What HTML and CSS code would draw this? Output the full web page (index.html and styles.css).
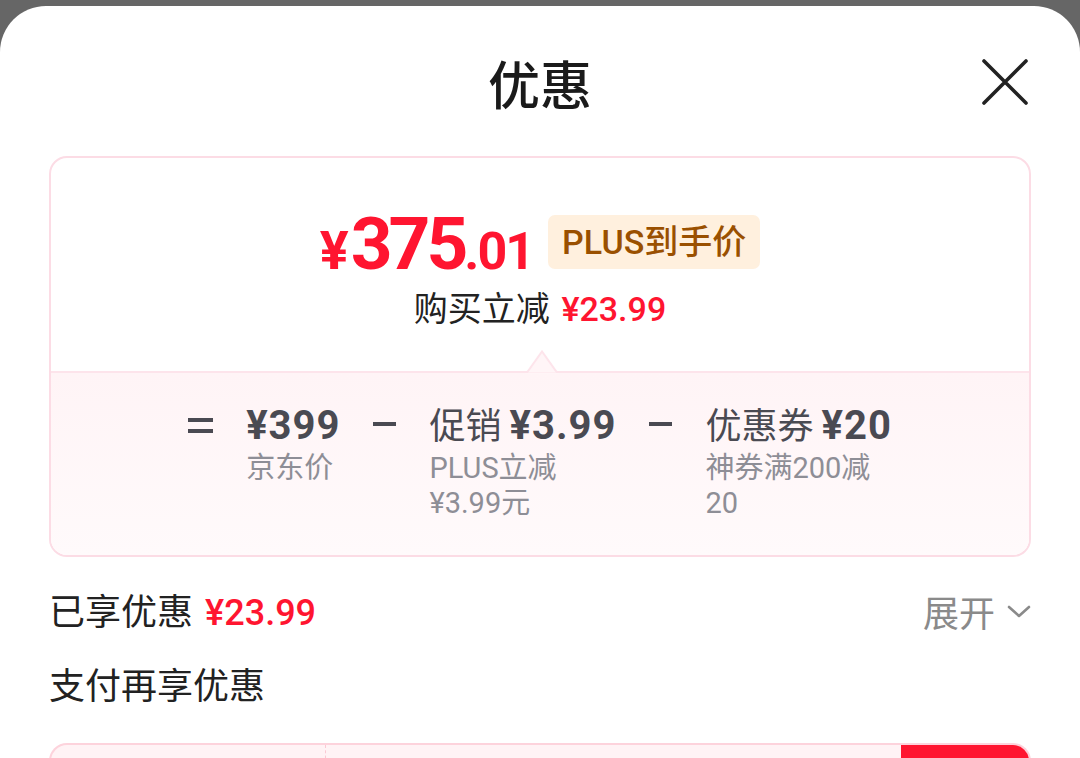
FILE: index.html
```html
<!DOCTYPE html>
<html lang="zh-CN">
  <head>
    <meta charset="UTF-8" />
    <meta name="viewport" content="width=device-width, initial-scale=1.0" />
    <title>优惠</title>
    <link rel="stylesheet" href="styles.css">
  </head>
  <body>
    <div class="sheet">
      <div class="header">
        <h1>优惠</h1>
        <button class="close" aria-label="关闭">
          <svg width="46" height="46" viewBox="0 0 46 46">
            <path d="M2 2 L44 44 M44 2 L2 44" stroke="#222" stroke-width="3.6" stroke-linecap="round" fill="none" />
          </svg>
        </button>
      </div>

      <div class="card">
        <div class="card-top">
          <div class="price-row">
            <div class="price">
              <span class="yen">¥</span><span class="int">375</span><span class="dec">.01</span>
            </div>
            <span class="badge">PLUS到手价</span>
          </div>
          <div class="saving">购买立减 <span class="red">¥23.99</span></div>
          <svg class="notch" width="34" height="24" viewBox="0 0 34 24">
            <path d="M0 22.5 L2 22.5 L17 1.5 L32 22.5 L34 22.5" stroke="#fde4eb" stroke-width="2" fill="#fff5f7" />
            <rect x="0" y="23" width="34" height="1" fill="#fff5f7" />
          </svg>
        </div>
        <div class="card-bottom">
          <div class="formula">
            <span class="op eq"></span>
            <div class="term">
              <div class="value"><b>¥399</b></div>
              <div class="sub">京东价</div>
            </div>
            <span class="op minus"></span>
            <div class="term">
              <div class="value">促销 <b>¥3.99</b></div>
              <div class="sub">PLUS立减¥3.99元</div>
            </div>
            <span class="op minus"></span>
            <div class="term">
              <div class="value">优惠券 <b>¥20</b></div>
              <div class="sub">神券满200减20</div>
            </div>
          </div>
        </div>
      </div>

      <div class="row enjoyed">
        <div>已享优惠 <span class="red">¥23.99</span></div>
        <div class="expand">
          展开
          <svg width="24" height="16" viewBox="0 0 24 16">
            <path d="M2 4 L12 13 L22 4" stroke="#8a8a8a" stroke-width="2.6" fill="none" stroke-linecap="round" stroke-linejoin="round" />
          </svg>
        </div>
      </div>
      <div class="row pay">支付再享优惠</div>

      <div class="pay-box">
        <div class="pay-left"></div>
        <div class="pay-mid"></div>
        <div class="pay-btn"></div>
      </div>
    </div>
  </body>
</html>
```

FILE: styles.css
```css
html, body {
  margin: 0;
  height: 100%;
}
body {
  background-color: #666;
  font-family: Roboto, "Noto Sans CJK SC", sans-serif;
  color: #222;
  overflow: hidden;
}
.sheet {
  position: relative;
  margin-top: 6px;
  height: calc(100% - 6px);
  background-color: #fff;
  border-radius: 46px 46px 0 0;
}
.header {
  height: 150px;
  padding-top: 47px;
  box-sizing: border-box;
  text-align: center;
}
.header h1 {
  margin: 0;
  font-family: "Noto Sans CJK SC", sans-serif;
  font-size: 52px;
  line-height: 60px;
  font-weight: 500;
  color: #1a1a1a;
}
.close {
  position: absolute;
  top: 53px;
  right: 52px;
  padding: 0;
  border: none;
  background: none;
  line-height: 0;
}
.red {
  color: #ff1530;
}

.card {
  margin: 0 49px;
  border: 2px solid #fcdce5;
  border-radius: 18px;
  overflow: hidden;
}
.card-top {
  position: relative;
  padding: 56px 0 42px;
  border-bottom: 2px solid #fde4eb;
  text-align: center;
}
.price-row {
  display: flex;
  justify-content: center;
  align-items: center;
  gap: 15px;
  height: 56px;
}
.price {
  margin-top: 24px;
  color: #ff1530;
  font-weight: 700;
  line-height: 56px;
  white-space: nowrap;
}
.price .yen {
  font-size: 54px;
  margin-right: 2px;
}
.price .int {
  font-size: 73px;
  letter-spacing: -4px;
}
.price .dec {
  font-size: 52px;
  letter-spacing: -2px;
}
.badge {
  display: inline-block;
  height: 54px;
  line-height: 54px;
  padding: 0 14px;
  border-radius: 7px;
  background-color: #fff0de;
  color: #9a5000;
  font-size: 34px;
  font-weight: 500;
}
.saving {
  margin-top: 17px;
  font-family: "Noto Sans CJK SC", sans-serif;
  font-size: 34px;
  line-height: 40px;
  color: #222;
}
.saving .red {
  font-family: Roboto, sans-serif;
  font-weight: 500;
  margin-left: 4px;
}
.notch {
  position: absolute;
  left: 474px;
  bottom: -3px;
}

.card-bottom {
  padding: 28px 0 34px;
  background: linear-gradient(#fff4f6, #fffafb);
}
.formula {
  display: flex;
  justify-content: center;
  gap: 33px;
  color: #4a4a52;
}
.op {
  position: relative;
  width: 25px;
  height: 44px;
}
.op::before,
.op::after {
  content: "";
  position: absolute;
  left: 0;
  width: 25px;
  height: 4px;
  background-color: #4a4a52;
}
.eq::before {
  top: 17px;
}
.eq::after {
  top: 28px;
}
.minus {
  width: 23px;
}
.minus::before {
  top: 21px;
  width: 23px;
}
.minus::after {
  display: none;
}
.term {
  display: flex;
  flex-direction: column;
}
.value {
  font-size: 36px;
  line-height: 44px;
  white-space: nowrap;
  font-family: "Noto Sans CJK SC", sans-serif;
}
.value b {
  font-family: Roboto, sans-serif;
  font-size: 40px;
  font-weight: 700;
  letter-spacing: 1px;
}
.sub {
  width: 0;
  min-width: 100%;
  margin-top: 3px;
  font-size: 29px;
  line-height: 35px;
  color: #8e8e96;
}

.row {
  display: flex;
  justify-content: space-between;
  align-items: center;
  padding: 0 49px;
  font-family: "Noto Sans CJK SC", sans-serif;
  font-size: 36px;
  line-height: 48px;
}
.row .red {
  font-family: Roboto, sans-serif;
  font-weight: 500;
  margin-left: 4px;
}
.enjoyed {
  margin-top: 28px;
}
.expand {
  display: flex;
  align-items: center;
  gap: 12px;
  color: #8a8a8a;
}
.pay {
  margin-top: 22px;
}
.pay-box {
  display: flex;
  height: 40px;
  margin: 36px 49px 0;
  border: 2px solid #fdd3dc;
  border-bottom: none;
  border-radius: 18px 18px 0 0;
  background-color: #fff3f5;
  overflow: hidden;
}
.pay-left {
  width: 274px;
  border-right: 1px dashed #fbc9d4;
}
.pay-mid {
  flex: 1;
}
.pay-btn {
  width: 128px;
  background-color: #ff1530;
}
```
